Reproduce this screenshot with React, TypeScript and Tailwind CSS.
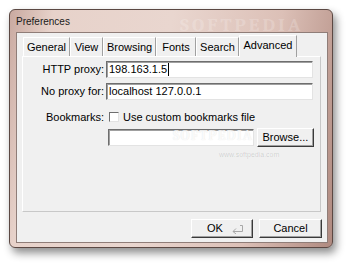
import React from "react";

const tabs = [
  { label: "General", w: "w-[47px]" },
  { label: "View", w: "w-[33px]" },
  { label: "Browsing", w: "w-[53px]" },
  { label: "Fonts", w: "w-[40px]" },
  { label: "Search", w: "w-[43px]" },
];

function Field({ value, className = "", caret = false }: { value?: string; className?: string; caret?: boolean }) {
  return (
    <div
      className={`flex h-[17px] items-center border border-b-[#e3e3e3] border-l-[#6e6e6e] border-r-[#e3e3e3] border-t-[#6e6e6e] bg-white pl-[2px] shadow-[inset_1px_1px_0_#a0a0a0] ${className}`}
    >
      <span className="leading-none">{value}</span>
      {caret && <span className="ml-px h-[13px] w-px bg-black" />}
    </div>
  );
}

function Button({ children, className = "" }: { children: React.ReactNode; className?: string }) {
  return (
    <div
      className={`relative flex h-[19px] items-center justify-center border border-b-[#3a3a3a] border-l-white border-r-[#3a3a3a] border-t-white bg-[#f0f0f0] shadow-[inset_-1px_-1px_0_#a0a0a0] ${className}`}
    >
      {children}
    </div>
  );
}

export default function App() {
  return (
    <div
      className="h-[266px] w-[350px] bg-white pl-[9px] pt-[9px] text-[11px] text-black"
      style={{ fontFamily: '"Liberation Sans", Arial, sans-serif' }}
    >
      <div className="relative flex h-[239px] w-[324px] flex-col rounded-[6px] border border-[#5b4843] bg-[linear-gradient(100deg,#c9a9a0_0%,#e7d2ca_12%,#e9d6cf_45%,#dcc0b7_75%,#b08a80_100%)] pb-[4px] pl-[6px] pr-[4px] shadow-[3px_5px_9px_rgba(0,0,0,0.45)]">
        <div className="pointer-events-none absolute left-[170px] top-[1px] font-serif text-[19px] font-bold tracking-[3px] text-white/20">
          SOFTPEDIA
        </div>
        <div className="flex h-[22px] items-center text-[10px] text-[#1a1a1a]">Preferences</div>
        <div className="flex flex-1 flex-col border border-[#8f7d78] bg-[#f0f0f0] pb-[4px] pl-[5px] pr-[5px] pt-[2px]">
          <div className="flex h-[21px] items-end pl-[1px]">
            {tabs.map((t) => (
              <div
                key={t.label}
                className={`flex h-[19px] ${t.w} items-center justify-center border border-b-0 border-l-white border-r-[#a0a0a0] border-t-white text-[11px]`}
              >
                {t.label}
              </div>
            ))}
            <div className="relative z-10 -mb-px flex h-[22px] w-[58px] items-center justify-center border border-b-0 border-l-white border-r-[#a0a0a0] border-t-white bg-[#f0f0f0] pb-[2px]">
              Advanced
            </div>
          </div>
          <div className="relative flex h-[156px] w-[299px] flex-col gap-[5px] border border-b-[#c8c8c8] border-l-white border-r-[#c8c8c8] border-t-white pr-[6px] pt-[4px]">
            <div className="pointer-events-none absolute left-[150px] top-[68px] font-serif text-[14px] font-bold tracking-[1px] text-white/80 [text-shadow:0_0_1px_rgba(0,0,0,0.12)]">
              SOFTPEDIA
            </div>
            <div className="pointer-events-none absolute left-[196px] top-[93px] text-[7px] text-black/15">
              www.softpedia.com
            </div>
            <div className="flex items-center">
              <div className="w-[83px] pr-[2px] text-right">HTTP proxy:</div>
              <Field value="198.163.1.5" caret className="w-[207px]" />
            </div>
            <div className="flex items-center">
              <div className="w-[83px] pr-[2px] text-right">No proxy for:</div>
              <Field value="localhost 127.0.0.1" className="w-[207px]" />
            </div>
            <div className="mt-[6px] flex h-[12px] items-center">
              <div className="w-[83px] pr-[2px] text-right">Bookmarks:</div>
              <div className="ml-[3px] h-[10px] w-[10px] border border-b-[#e3e3e3] border-l-[#6e6e6e] border-r-[#e3e3e3] border-t-[#6e6e6e] bg-white" />
              <span className="ml-[4px]">Use custom bookmarks file</span>
            </div>
            <div className="flex items-center pl-[85px]">
              <Field className="w-[148px]" />
              <Button className="ml-[3px] w-[58px]">Browse...</Button>
            </div>
          </div>
          <div className="mt-[7px] flex justify-end gap-[6px]">
            <Button className="w-[62px]">
              <span className="mr-[14px]">OK</span>
              <svg className="absolute right-[8px] top-[4px]" width="12" height="10" viewBox="0 0 12 10" fill="none" stroke="#a8a8a8" strokeWidth="1">
                <path d="M1 7.5 L4 4.5 M1 7.5 L4 10 M1 7.5 H10.5 V1.5 H8" />
              </svg>
            </Button>
            <Button className="w-[63px]">Cancel</Button>
          </div>
        </div>
      </div>
    </div>
  );
}
